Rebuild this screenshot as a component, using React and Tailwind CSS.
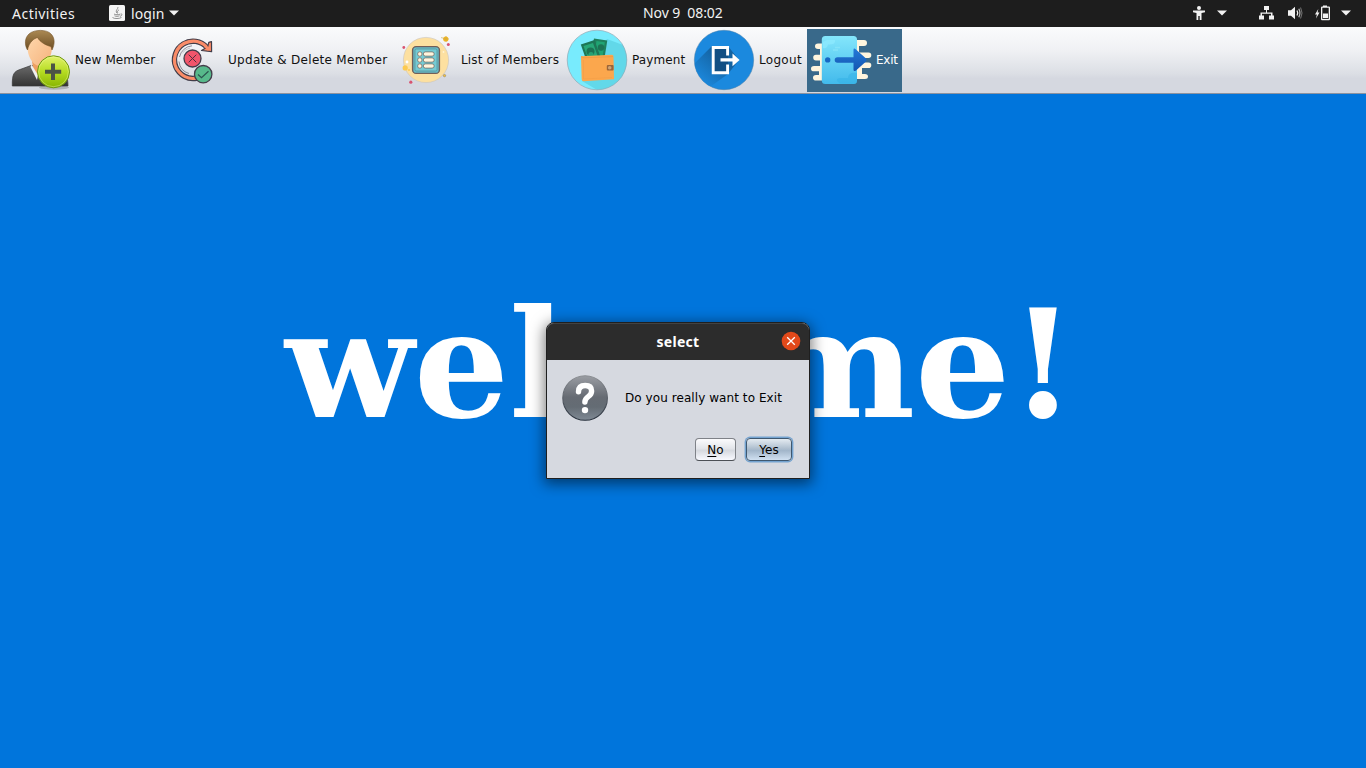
import React from "react";

const art = "block shrink-0 h-[66px]";

function NewMemberIcon() {
  return (
    <svg className={`${art} w-[75px]`} viewBox="0 27 75 66">
      <defs>
        <linearGradient id="suit" x1="0" y1="0" x2="0" y2="1">
          <stop offset="0" stopColor="#6a6a6a" />
          <stop offset="1" stopColor="#333" />
        </linearGradient>
        <linearGradient id="skin" x1="0" y1="0" x2="1" y2="1">
          <stop offset="0" stopColor="#ffd9ae" />
          <stop offset="1" stopColor="#f5b27c" />
        </linearGradient>
        <linearGradient id="hair" x1="0" y1="0" x2="0" y2="1">
          <stop offset="0" stopColor="#ab8953" />
          <stop offset="1" stopColor="#6b4c22" />
        </linearGradient>
        <linearGradient id="lime" x1="0" y1="0" x2="0" y2="1">
          <stop offset="0" stopColor="#e2f26a" />
          <stop offset="0.5" stopColor="#b5dc22" />
          <stop offset="1" stopColor="#86b300" />
        </linearGradient>
      </defs>
      <ellipse cx="54" cy="87.500" rx="15" ry="2.200" fill="#000" opacity="0.18" />
      <path d="M12.300 86 C12 74 14 71.500 20 69.500 L31 65.500 H46 L57 69 C66 72 68 77 68 86 Z" fill="url(#suit)" stroke="#3b3b3b" strokeWidth="0.7" />
      <path d="M32 61 H46 L45 71 L38 76 L33 68 Z" fill="#ee9f61" />
      <path d="M31.500 64.500 L38 75 L37 80 L30.500 67 Z" fill="#f0f0f0" />
      <path d="M27.500 46 C28 37 34 34 40 34 C49 34 52 39 52 47 C52 56 47 66 40 66 C33 66 27 56 27.500 46 Z" fill="url(#skin)" />
      <path d="M27.500 50 C24.500 45 24.500 38 29 34 C34 29.200 47 29.200 51 34 C55 38 55 44 52 50 L51 46.500 C46 45.500 40 42 37.500 37.500 C34 38.500 29 42 27.500 50 Z" fill="url(#hair)" stroke="#725123" strokeWidth="0.6" />
      <circle cx="53.500" cy="71.800" r="16" fill="url(#lime)" stroke="#6e9610" strokeWidth="1" />
      <circle cx="53.500" cy="71.800" r="14.900" fill="none" stroke="#edf9a5" strokeWidth="0.6" opacity="0.7" />
      <path d="M51 63.500 h4 v6.200 h6.200 v4 h-6.200 v6.300 h-4 v-6.300 h-6 v-4 h6 Z" fill="#4b5346" />
    </svg>
  );
}

function UpdateIcon() {
  return (
    <svg className={`${art} w-[68px]`} viewBox="160 27 68 66" fill="none">
      <path d="M207 47.500 A18.600 18.600 0 1 0 197 78" stroke="#423d49" strokeWidth="5.400" />
      <path d="M206.800 47.200 A18.600 18.600 0 1 0 197 78" stroke="#fa8c68" strokeWidth="3.200" />
      <path d="M201.500 50.500 L211.600 51.700 L211.500 41.700 L208.800 42.300 L207.600 47 Z" fill="#fa8c68" stroke="#423d49" strokeWidth="1.200" strokeLinejoin="round" />
      <path d="M205 45.700 L209 49.700" stroke="#fa8c68" strokeWidth="3" />
      <path d="M179.500 57 A14 14 0 0 1 192 45.800 M179 61.500 A14 14 0 0 0 189 73.500" stroke="#555262" strokeWidth="0.9" opacity="0.7" />
      <path d="M182.500 53 A13 13 0 0 1 190 48" stroke="#555262" strokeWidth="0.6" opacity="0.5" />
      <circle cx="192.500" cy="58.500" r="8.500" fill="#f1556b" stroke="#423d49" strokeWidth="1.300" />
      <path d="M188.700 54.700 l7.600 7.600 M196.300 54.700 l-7.600 7.600" stroke="#51313e" strokeWidth="1" />
      <circle cx="203.200" cy="74.200" r="8.700" fill="#57b98b" stroke="#423d49" strokeWidth="1.300" />
      <path d="M198 74.500 l3.500 3.200 l7 -6.500" stroke="#2b5450" strokeWidth="1.200" />
    </svg>
  );
}

function ListIcon() {
  return (
    <svg className={`${art} w-[66px]`} viewBox="395 27 66 66">
      <circle cx="426" cy="60" r="22.600" fill="#fde0a0" stroke="#c9c5bd" strokeWidth="0.6" />
      <rect x="412.600" y="46.600" width="26.800" height="26.800" rx="3.500" fill="#64bdca" stroke="#735e58" strokeWidth="1.400" />
      <rect x="415" y="49" width="22" height="22" rx="1.500" fill="#74cbd4" stroke="#5c8285" strokeWidth="0.6" />
      {[54, 60, 66].map((y) => (
        <g key={y} fill="#fff5dd" stroke="#735e58" strokeWidth="0.7">
          <circle cx="419.800" cy={y} r="2.200" />
          <rect x="423.300" y={y - 2.1} width="10.900" height="4.200" rx="2.100" />
        </g>
      ))}
      <circle cx="445.800" cy="39" r="2.600" fill="#f4b81f" />
      <path d="M441 37.600 l3.500 .8 M446 36 v6 M443 39 h6" stroke="#c9a648" strokeWidth="0.6" />
      <circle cx="448.300" cy="44.500" r="1.500" fill="#d85470" />
      <circle cx="403.800" cy="47.500" r="1.400" fill="#d85470" />
      <circle cx="410.800" cy="82.200" r="1.600" fill="#d85470" />
      <circle cx="405.200" cy="67.900" r="2.600" fill="#fcca51" />
      <circle cx="409" cy="70" r="1" fill="#fcca51" />
      <circle cx="444.500" cy="75.600" r="1.200" fill="#f4c33b" stroke="#8a7654" strokeWidth="0.5" />
      <circle cx="407" cy="62" r="1.400" fill="#fff" />
      <circle cx="443.500" cy="52" r="0.900" fill="#fff3d2" />
    </svg>
  );
}

function PaymentIcon() {
  return (
    <svg className={`${art} w-[66px]`} viewBox="566 27 66 66">
      <clipPath id="disc">
        <circle cx="597" cy="60" r="29.800" />
      </clipPath>
      <g clipPath="url(#disc)">
        <rect x="566" y="30" width="62" height="62" fill="#78ebfd" />
        <path d="M607 39 L634 49 V94 H604 L582 81 Z" fill="#62d8e9" />
      </g>
      <circle cx="597" cy="60" r="29.800" fill="none" stroke="#8fa9b5" strokeWidth="0.7" />
      <path d="M594 38.500 L607.300 40.500 L604.500 58 H590 Z" fill="#1f805c" />
      <path d="M596.500 41 L604.800 42.300 L602.500 57 H594 Z" fill="#20a473" />
      <path d="M580.800 44.500 L594.500 40 L600.500 57 L585.500 58 Z" fill="#1d7757" />
      <path d="M583.500 46 L593 43 L598 57 H587.500 Z" fill="#27a878" />
      <circle cx="590.500" cy="51.500" r="4" fill="#1c7354" />
      <circle cx="601" cy="47.500" r="3.200" fill="#1c7354" />
      <circle cx="591" cy="54.500" r="2.500" fill="#25a174" />
      <path d="M581 57 L612 55.500 Q613.500 55.500 613.500 57.500 L614 80 L583.500 82 Q581.700 82 581.700 80 Z" fill="#fba74d" transform="translate(0 -0.700)" />
      <path d="M581 56.600 L584 57.800 L613 56.600" stroke="#e9963f" strokeWidth="0.7" fill="none" />
      <path d="M583.500 60 V79 L612 77.500" stroke="#f19d47" strokeWidth="0.6" fill="none" />
      <rect x="606.800" y="65" width="6.800" height="5.500" rx="1" fill="#9a6539" />
      <circle cx="609.700" cy="67.700" r="1.800" fill="#d1a371" />
    </svg>
  );
}

function LogoutIcon() {
  return (
    <svg className={`${art} w-[66px]`} viewBox="693 27 66 66">
      <defs>
        <linearGradient id="longShadow" gradientUnits="userSpaceOnUse" x1="722" y1="58" x2="702" y2="80">
          <stop offset="0" stopColor="#1463a2" />
          <stop offset="1" stopColor="#1b86d9" />
        </linearGradient>
      </defs>
      <clipPath id="logoutDisc">
        <circle cx="724" cy="60" r="29.600" />
      </clipPath>
      <circle cx="724" cy="60" r="29.700" fill="#1b89de" stroke="#487fa9" strokeWidth="0.5" />
      <g clipPath="url(#logoutDisc)">
        <path d="M712 46 L686 72 V104 L728 74 L739 60 L728 46 Z" fill="url(#longShadow)" />
        <path d="M712 47 H728 V73 H712 Z" fill="#124f83" />
      </g>
      <path d="M727.600 55.500 V47.500 H713.200 V72.700 H727.600 V64.500" fill="none" stroke="#fff" strokeWidth="2.900" />
      <path d="M720.500 58.300 H732.500 V53.500 L739.600 59.900 L732.500 66.200 V61.500 H720.500 Z" fill="#fff" />
    </svg>
  );
}

function ExitIcon() {
  return (
    <svg className="block shrink-0 h-[63px] w-[69px]" viewBox="807 29 69 63">
      <defs>
        <linearGradient id="door" x1="0" y1="0" x2="0" y2="1">
          <stop offset="0" stopColor="#84e6fb" />
          <stop offset="1" stopColor="#42baec" />
        </linearGradient>
        <linearGradient id="arrow" x1="0" y1="0" x2="0" y2="1">
          <stop offset="0" stopColor="#2379d8" />
          <stop offset="1" stopColor="#1455b0" />
        </linearGradient>
      </defs>
      <g fill="#fff5de">
        <path d="M825 43.500 H818 Q815 43.500 815 46.300 Q815 49 818 49 H820 V54.800 H816 Q813.200 54.800 813.200 57.500 Q813.200 60.500 816 60.500 H820 V66 H814 Q811 66 811 68.700 Q811 71.300 814 71.300 H819 V75 H816 Q813 75 813 77.800 Q813 80.600 816 80.600 H825 Z" />
        <path d="M852 40 H864 Q867 40 867 43 Q867 46 864 46 H859 V52.500 H868.500 Q871.300 52.500 871.300 55.300 Q871.300 58 868.500 58 H864 V62.500 H868.500 Q871.300 62.500 871.300 65.200 Q871.300 68 868.500 68 H862 V74 H865 Q868 74 868 76.500 Q868 79 865 79 H856 V75 H852 Z" />
      </g>
      <rect x="821.800" y="36" width="35.200" height="48" rx="3.500" fill="url(#door)" />
      <path d="M827 40 H835 Q836 45 828 44.500 Q827 49 823 48 V42 Z" fill="#93edff" opacity="0.6" />
      <path d="M840 83.500 Q834 80 839 78 H848 Q848 72 857 73 V81 Q857 84 853 84 Z" fill="#31b0e5" opacity="0.45" />
      <path d="M833 50 h5 M835 47.500 h5" stroke="#91e9fb" strokeWidth="1.500" opacity="0.6" />
      <circle cx="827.700" cy="59.900" r="2.700" fill="#1768c4" />
      <path d="M837.500 57.200 H853.500 V50 Q853.500 47.500 856 49.500 L866 58.500 Q867.500 60 866 61.500 L856 70.500 Q853.500 72 853.500 69.500 V62.700 H837.500 Q834.700 62.700 834.700 60 Q834.700 57.200 837.500 57.200 Z" fill="url(#arrow)" />
    </svg>
  );
}

function Caret({ className }) {
  return (
    <svg className={`block shrink-0 w-[10px] h-[6px] ${className}`} viewBox="0 0 10 6">
      <path d="M0 0.500 H10 L5 5.500 Z" fill="#f2f2f2" />
    </svg>
  );
}

function TopBar() {
  return (
    <header className="flex h-[27px] items-center bg-[#1d1d1d] font-['Noto_Sans','Open_Sans',sans-serif] text-[14px] leading-[27px] text-[#f2f2f2] whitespace-pre">
      <span className="ml-3 w-[97px] tracking-[0.48px]">Activities</span>
      <svg className="-mt-px block w-4 h-4 shrink-0" viewBox="0 0 16 16" fill="none">
        <rect width="16" height="16" rx="1.500" fill="#f4f4f4" />
        <path d="M8.800 2 C9.500 4 6 5 7.800 8 M10 5 C7.500 6 9 7 8.500 8.500 M5 9 C6 10 10 9.800 11 9.200 M5.500 10.800 C7 11.600 9 11.400 10.500 10.800 M3.500 12.500 C5 14 11 13.800 12.500 12.400 M11.500 9 C14 8.500 13 11 11 11.300" stroke="#777" strokeWidth="0.8" />
      </svg>
      <span className="ml-1.5 w-[38px] tracking-[0.1px]">login</span>
      <Caret className="-mt-px" />
      <span className="-mt-[2px] ml-[464px] w-[80px] tracking-[-0.08px]">Nov 9  08:02</span>
      <svg className="-mt-px ml-[470px] block w-3 h-[15px] shrink-0" viewBox="1193 6 12 15" fill="#f2f2f2">
        <circle cx="1199" cy="8" r="2" />
        <path d="M1193 10.500 H1205 V12.200 L1201.500 13 V20 H1199.700 V16 H1198.300 V20 H1196.500 V13 L1193 12.200 Z" />
      </svg>
      <Caret className="-mt-px ml-3" />
      <svg className="-mt-px ml-8 block w-[15px] h-[14px] shrink-0" viewBox="0 0 15 14" fill="#f2f2f2">
        <path d="M5 0 h5 v4 h-2 v2.500 h5.500 v3 h1.500 v4 h-5 v-4 h2 v-1.800 H3 V9.500 H5 v4 H0 v-4 h1.500 V6.500 h5.500 V4 H5 Z" />
      </svg>
      <svg className="-mt-px ml-[14px] block w-[15px] h-[14px] shrink-0" viewBox="0 0 15 14" fill="none">
        <path d="M0 4.300 H3 L7 0.800 V13.200 L3 9.700 H0 Z" fill="#f2f2f2" />
        <path d="M9 4.500 Q10.500 7 9 9.500" stroke="#f2f2f2" strokeWidth="1.300" />
        <path d="M10.800 2.800 Q13 7 10.800 11.200" stroke="#c0c0c0" strokeWidth="1.200" />
        <path d="M12.600 1.500 Q15.500 7 12.600 12.500" stroke="#777" strokeWidth="1" />
      </svg>
      <svg className="-mt-[2px] ml-[12px] block w-4 h-4 shrink-0" viewBox="0 0 16 16" fill="#f2f2f2">
        <path d="M3.300 4 L0 9.500 H1.900 L1 13.500 L4.500 7.600 H2.600 Z" />
        <path d="M8 0.500 H12 V1.500 H14 Q15 1.500 15 2.500 V14 Q15 15.200 14 15.200 H7 Q6 15.200 6 14 V2.500 Q6 1.500 7 1.500 H8 Z M7.300 2.800 V13.900 H13.700 V2.800 Z" fillRule="evenodd" />
        <rect x="8" y="8.500" width="5" height="4.600" />
      </svg>
      <Caret className="-mt-px ml-[10px]" />
    </header>
  );
}

function Toolbar() {
  return (
    <nav className="flex h-[67px] border-b border-[#8b92a0] bg-[linear-gradient(#fafbfc_0%,#f0f1f4_35%,#dcdfe5_70%,#d5d8e0_78%,#d5d8e0_100%)] font-['DejaVu_Sans',sans-serif] text-[12px] leading-[66px] text-[#111] whitespace-nowrap">
      <NewMemberIcon />
      <span className="w-[85px] tracking-[0.1px]">New Member</span>
      <UpdateIcon />
      <span className="w-[167px] tracking-[0.29px]">Update &amp; Delete Member</span>
      <ListIcon />
      <span className="w-[105px] tracking-[0.15px]">List of Members</span>
      <PaymentIcon />
      <span className="w-[61px] tracking-[0.12px]">Payment</span>
      <LogoutIcon />
      <span className="w-[48px] tracking-[0.3px]">Logout</span>
      <div className="mt-[2px] flex h-[63px] w-[95px] bg-[#39698a] text-white leading-[62px]">
        <ExitIcon />
        <span className="tracking-[-0.25px]">Exit</span>
      </div>
    </nav>
  );
}

function Dialog() {
  return (
    <div className="absolute left-[546px] top-[322px] flex h-[157px] w-[264px] flex-col rounded-t-[8px] border border-[#1f1f1f] bg-[#d6d9e0] shadow-[0_3px_14px_2px_rgba(0,0,0,0.5)]">
      <div className="relative flex h-[37px] shrink-0 items-center justify-center rounded-t-[7px] border-t border-[#424242] bg-[#2c2c2c] font-['Noto_Sans','Open_Sans',sans-serif] text-[14px] font-bold text-white">
        <span className="-mt-[2px] tracking-[0.3px]">select</span>
        <svg className="absolute right-[8px] top-[7px] h-[20px] w-[20px]" viewBox="0 0 20 20">
          <circle cx="10" cy="10" r="9.300" fill="#e2491a" />
          <path d="M6.200 6.200 L13.800 13.800 M13.800 6.200 L6.200 13.800" stroke="#fff" strokeWidth="1.300" />
        </svg>
      </div>
      <div className="flex items-center pl-[15px] pt-[15px] font-['DejaVu_Sans',sans-serif] text-[12px] text-black">
        <svg className="block h-[47px] w-[47px] shrink-0" viewBox="0 0 47 47">
          <defs>
            <linearGradient id="orb" x1="0" y1="0" x2="0" y2="1">
              <stop offset="0" stopColor="#9a9da3" />
              <stop offset="0.48" stopColor="#666b73" />
              <stop offset="0.7" stopColor="#646c74" />
              <stop offset="1" stopColor="#7f8994" />
            </linearGradient>
            <linearGradient id="orbRim" x1="0" y1="0" x2="0" y2="1">
              <stop offset="0" stopColor="#8b8e93" />
              <stop offset="1" stopColor="#252e3a" />
            </linearGradient>
          </defs>
          <circle cx="23.100" cy="23" r="22.300" fill="url(#orb)" stroke="url(#orbRim)" strokeWidth="1.100" />
          <path d="M16.500 16.800 Q16.500 10.500 23.200 10.500 Q29.600 10.500 29.600 16 Q29.600 19.200 26.500 21.400 Q23 23.800 22.900 27" fill="none" stroke="#fff" strokeWidth="5.400" strokeLinecap="round" />
          <circle cx="23" cy="35.100" r="3.200" fill="#fff" />
        </svg>
        <span className="-mt-[2px] ml-4 whitespace-nowrap tracking-[0.07px]">Do you really want to Exit</span>
      </div>
      <div className="mt-[16px] flex justify-end gap-[10px] pr-[17px] font-['DejaVu_Sans',sans-serif] text-[12px] leading-[22px] text-black">
        <button className="h-[23px] w-[41px] rounded-[4px] border border-[#7f8288] border-b-[#4c5056] bg-[linear-gradient(#fbfbfd,#e3e5ea_45%,#d6d9df_55%,#f9faff)]">
          <span className="underline underline-offset-2">N</span>o
        </button>
        <button className="h-[23px] w-[46px] rounded-[4px] border border-[#3f5870] bg-[linear-gradient(#e4ebf1,#afbfcf_45%,#a2b6ca_55%,#d0e0f1)] shadow-[0_0_0_1.400px_#74a3d0]">
          <span className="underline underline-offset-2">Y</span>es
        </button>
      </div>
    </div>
  );
}

export default function App() {
  return (
    <div className="relative flex h-[768px] w-[1366px] flex-col overflow-hidden bg-[#0075dc]">
      <TopBar />
      <Toolbar />
      <main className="flex-1 pl-[285px] pt-[183px]">
        <h1 className="font-['DejaVu_Serif',serif] text-[150px] font-bold leading-[175px] tracking-[-0.28px] text-white whitespace-nowrap">welcome!</h1>
      </main>
      <Dialog />
    </div>
  );
}
